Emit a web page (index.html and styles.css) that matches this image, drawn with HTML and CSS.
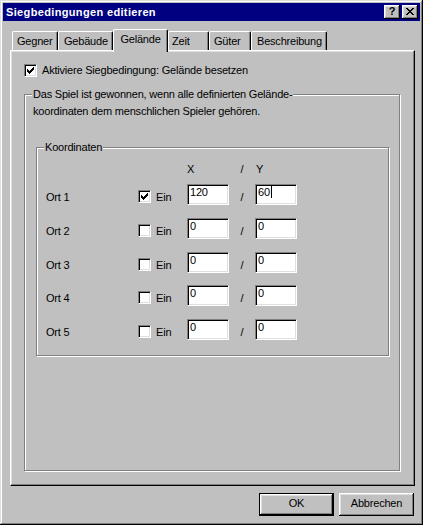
FILE: index.html
```html
<!DOCTYPE html>
<html lang="de">
<head>
<meta charset="utf-8">
<title>Siegbedingungen editieren</title>
<link rel="stylesheet" href="styles.css">
</head>
<body>
<div class="window">
  <div class="titlebar">
    <span class="title">Siegbedingungen editieren</span>
    <div class="tb-buttons">
      <span class="tb-btn help">?</span>
      <span class="tb-btn close"><svg width="8" height="7" viewBox="0 0 8 7" shape-rendering="crispEdges"><path d="M0 0h2v1h-2z M6 0h2v1h-2z M1 1h2v1h-2z M5 1h2v1h-2z M2 2h4v1h-4z M3 3h2v1h-2z M2 4h4v1h-4z M1 5h2v1h-2z M5 5h2v1h-2z M0 6h2v1h-2z M6 6h2v1h-2z"/></svg></span>
    </div>
  </div>
  <div class="content">
    <div class="tabs">
      <span class="tab w-gegner">Gegner</span>
      <span class="tab w-gebaeude">Gebäude</span>
      <span class="tab active w-gelaende">Gelände</span>
      <span class="tab w-zeit">Zeit</span>
      <span class="tab w-gueter">Güter</span>
      <span class="tab w-beschreibung">Beschreibung</span>
    </div>
    <div class="panel">
      <div class="check-row">
        <span class="checkbox"><svg width="7" height="7" viewBox="0 0 7 7" shape-rendering="crispEdges"><path d="M6 0h1v1h-1z M5 1h2v1h-2z M0 2h1v1h-1z M4 2h3v1h-3z M0 3h2v1h-2z M3 3h3v1h-3z M0 4h5v1h-5z M1 5h3v1h-3z M2 6h1v1h-1z"/></svg></span>
        <span>Aktiviere Siegbedingung: Gelände besetzen</span>
      </div>
      <div class="group outer-group">
        <div class="caption">Das Spiel ist gewonnen, wenn alle definierten Gelände-</div>
        <p class="desc">koordinaten dem menschlichen Spieler gehören.</p>
        <div class="group coord-group">
          <div class="caption">Koordinaten</div>
          <div class="coord-head">
            <span class="h-x">X</span>
            <span class="h-slash">/</span>
            <span class="h-y">Y</span>
          </div>
          <div class="coord-rows">
            <span class="lbl">Ort 1</span>
            <span class="checkbox small"><svg width="7" height="7" viewBox="0 0 7 7" shape-rendering="crispEdges"><path d="M6 0h1v1h-1z M5 1h2v1h-2z M0 2h1v1h-1z M4 2h3v1h-3z M0 3h2v1h-2z M3 3h3v1h-3z M0 4h5v1h-5z M1 5h3v1h-3z M2 6h1v1h-1z"/></svg></span>
            <span class="ein">Ein</span>
            <span class="field">120</span>
            <span class="slash">/</span>
            <span class="field">60<span class="caret"></span></span>

            <span class="lbl">Ort 2</span>
            <span class="checkbox small"></span>
            <span class="ein">Ein</span>
            <span class="field">0</span>
            <span class="slash">/</span>
            <span class="field">0</span>

            <span class="lbl">Ort 3</span>
            <span class="checkbox small"></span>
            <span class="ein">Ein</span>
            <span class="field">0</span>
            <span class="slash">/</span>
            <span class="field">0</span>

            <span class="lbl">Ort 4</span>
            <span class="checkbox small"></span>
            <span class="ein">Ein</span>
            <span class="field">0</span>
            <span class="slash">/</span>
            <span class="field">0</span>

            <span class="lbl">Ort 5</span>
            <span class="checkbox small"></span>
            <span class="ein">Ein</span>
            <span class="field">0</span>
            <span class="slash">/</span>
            <span class="field">0</span>
          </div>
        </div>
      </div>
    </div>
    <div class="buttons">
      <span class="btn default">OK</span>
      <span class="btn">Abbrechen</span>
    </div>
  </div>
</div>
</body>
</html>
```

FILE: styles.css
```css
* { box-sizing: border-box; }
html, body { margin: 0; padding: 0; }
body {
  background: #c0c0c0;
  font-family: "Liberation Sans", Arial, sans-serif;
  font-size: 11px;
  line-height: 13px;
  letter-spacing: -0.2px;
  color: #000;
}
.window {
  width: 423px;
  height: 525px;
  background: #c0c0c0;
  padding: 3px;
  box-shadow: inset -1px -1px #000, inset 1px 1px #dfdfdf, inset -2px -2px #808080, inset 2px 2px #fff;
  display: flex;
  flex-direction: column;
}
.titlebar {
  height: 18px;
  flex: none;
  background: #000080;
  color: #fff;
  display: flex;
  align-items: center;
  padding: 0 2px 0 3px;
}
.title { font-weight: bold; flex: 1; letter-spacing: 0.35px; }
.tb-buttons { display: flex; gap: 2px; }
.tb-btn {
  width: 16px;
  height: 14px;
  background: #c0c0c0;
  color: #000;
  box-shadow: inset -1px -1px #000, inset 1px 1px #fff, inset -2px -2px #808080, inset 2px 2px #dfdfdf;
  display: flex;
  justify-content: center;
  letter-spacing: 0;
}
.tb-btn.help { font-weight: bold; align-items: center; padding-bottom: 1px; }
.tb-btn.close { align-items: flex-start; padding-top: 3px; }
.tb-btn svg { display: block; fill: #000; }

.content {
  flex: 1;
  padding: 8px 5px 6px 7px;
  display: flex;
  flex-direction: column;
}
.tabs {
  display: flex;
  align-items: flex-end;
  height: 21px;
  flex: none;
  padding-left: 2px;
}
.tab {
  height: 19px;
  padding: 3px 0 0 4px;
  border-top: 1px solid #fff;
  border-left: 1px solid #fff;
  border-right: 1px solid #000;
  border-radius: 2px 2px 0 0;
  box-shadow: inset -1px 0 #808080;
  background: #c0c0c0;
  white-space: nowrap;
}
.tab.active {
  height: 23px;
  margin-bottom: -2px;
  position: relative;
  z-index: 1;
  padding-left: 0;
  text-align: center;
}
.w-gegner { width: 46px; }
.w-gebaeude { width: 55px; padding-left: 5px; }
.w-gelaende { width: 55px; }
.w-zeit { width: 41px; padding-left: 3px; }
.w-gueter { width: 42px; }
.w-beschreibung { width: 76px; padding-left: 5px; }

.panel {
  height: 436px;
  flex: none;
  border-top: 1px solid #fff;
  border-left: 1px solid #fff;
  border-right: 1px solid #000;
  border-bottom: 1px solid #000;
  box-shadow: inset -1px -1px #808080, inset 1px 1px #dfdfdf;
  padding: 13px 14px 0 13px;
}
.check-row {
  display: flex;
  align-items: center;
  gap: 5px;
  height: 13px;
}
.checkbox {
  width: 13px;
  height: 13px;
  flex: none;
  background: #fff;
  border: 1px solid;
  border-color: #808080 #fff #fff #808080;
  box-shadow: inset 1px 1px #000, inset -1px -1px #dfdfdf;
  padding: 2px 0 0 2px;
}
.checkbox svg { display: block; fill: #000; }
.checkbox.small { margin-top: 6px; }

.group {
  border: 1px solid #808080;
  box-shadow: inset 1px 1px #fff, 1px 1px #fff;
}
.caption {
  width: fit-content;
  background: #c0c0c0;
  margin: -7px 0 0 7px;
  padding: 0 1px;
  white-space: nowrap;
}
.outer-group {
  margin-top: 17px;
  height: 377px;
}
.desc {
  margin: 4px 0 0 0;
  padding-left: 8px;
}
.coord-group {
  margin: 29px 10px 0 11px;
  height: 209px;
}
.coord-head,
.coord-rows {
  display: grid;
  grid-template-columns: 92px 13px 36px 42px 26px 42px;
  margin-left: 9px;
}
.coord-head {
  margin-top: 9px;
  height: 13px;
}
.h-x { grid-column: 4; }
.h-slash { grid-column: 5; text-align: center; }
.h-y { grid-column: 6; padding-left: 1px; }
.coord-rows {
  margin-top: 8px;
  grid-auto-rows: 21px;
  row-gap: 12.75px;
  align-items: start;
}
.lbl { padding-top: 7px; }
.ein { padding: 7px 0 0 5px; }
.slash { padding-top: 7px; text-align: center; }
.field {
  width: 42px;
  height: 21px;
  background: #fff;
  border: 1px solid;
  border-color: #808080 #fff #fff #808080;
  box-shadow: inset 1px 1px #000, inset -1px -1px #dfdfdf;
  padding: 1px 0 0 2px;
  white-space: nowrap;
}
.caret {
  display: inline-block;
  width: 1px;
  height: 12px;
  background: #000;
  margin-left: 1px;
  vertical-align: -2px;
}

.buttons {
  display: flex;
  justify-content: flex-end;
  gap: 5px;
  margin-top: 7px;
  padding-right: 1px;
}
.btn {
  width: 75px;
  height: 23px;
  background: #c0c0c0;
  box-shadow: inset -1px -1px #000, inset 1px 1px #fff, inset -2px -2px #808080, inset 2px 2px #dfdfdf;
  display: flex;
  align-items: center;
  justify-content: center;
  padding-bottom: 2px;
}
.btn.default {
  border: 1px solid #000;
}
```
